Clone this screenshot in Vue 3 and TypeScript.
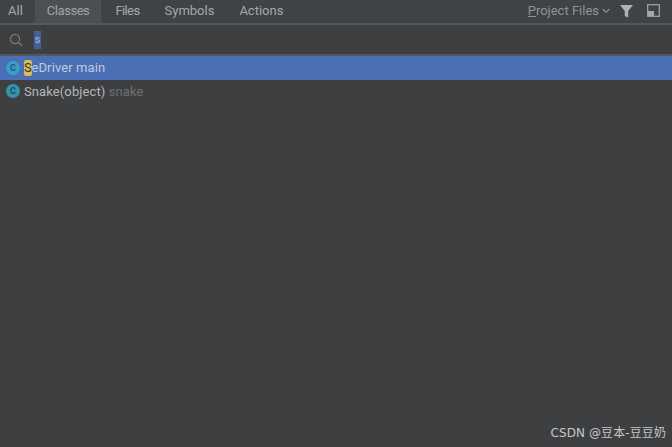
<script setup lang="ts">
const tabs = ['All', 'Classes', 'Files', 'Symbols', 'Actions']
</script>

<template>
  <div class="page">
    <header class="tabs">
      <div v-for="t in tabs" :key="t" class="tab" :class="['tab-' + t.toLowerCase(), { active: t === 'Classes' }]">{{ t }}</div>
      <div class="tools">
        <span class="scope"><u>P</u>roject Files</span>
        <svg class="chev" width="8" height="6" viewBox="0 0 8 6"><path d="M0.7 1l3.3 3.3L7.3 1" fill="none" stroke="#8b8f92" stroke-width="1.2"/></svg>
        <svg class="funnel" width="13" height="14" viewBox="0 0 13 14"><path d="M0 1h13L8.2 7v6.5L4.8 12V7z" fill="#b0b3b5"/></svg>
        <svg class="pin" width="13" height="13" viewBox="0 0 13 13"><rect x="0.7" y="0.7" width="11.6" height="11.6" fill="none" stroke="#a4a7a9" stroke-width="1.2"/><rect x="1" y="7" width="6" height="5" fill="#a4a7a9"/></svg>
      </div>
    </header>
    <div class="search">
      <svg width="14" height="14" viewBox="0 0 14 14"><circle cx="6" cy="6" r="4.6" fill="none" stroke="#777a7c" stroke-width="1.2"/><path d="M9.5 9.5l3.5 3.5" stroke="#777a7c" stroke-width="1.3"/></svg>
      <span class="query">s</span>
    </div>
    <div class="row selected">
      <span class="icon">C</span>
      <span class="name"><span class="hit">S</span>eDriver main</span>
    </div>
    <div class="row">
      <span class="icon">C</span>
      <span class="name">Snake(object) <span class="dim">snake</span></span>
    </div>
    <div class="mark">CSDN @豆本-豆豆奶</div>
  </div>
</template>

<style>
html, body { margin: 0; background: #3e3f41; }
</style>

<style scoped>
.page {
  position: relative;
  width: 672px;
  height: 447px;
  overflow: hidden;
  background: #3e3f41;
  color: #b4b7b9;
  font-family: "Roboto", "Noto Sans", sans-serif;
  font-size: 13px;
}
.tabs {
  display: flex;
  height: 23px;
  border-bottom: 2px solid #55585a;
  background: #404345;
}
.tab {
  padding: 0 12.5px;
  line-height: 21px;
  color: #a5a8aa;
}
.tab-all { padding: 0 12px 0 8px; }
.tab.active {
  background: #4b5053;
  padding: 0 12px;
  margin-right: 1.5px;
  color: #a0a4a6;
}
.tab-classes { letter-spacing: -0.45px; }
.tab-files { letter-spacing: -0.6px; }
.tools {
  margin-left: auto;
  display: flex;
  align-items: center;
  height: 21px;
  padding-right: 12px;
}
.scope { color: #8f9395; }
.chev { margin-left: 3px; }
.funnel { margin-left: 10px; }
.pin { margin-left: 14px; }
.search {
  display: flex;
  align-items: center;
  height: 29px;
  padding-left: 9px;
  border-bottom: 2px solid #55585a;
  background: #3e3f40;
}
.query {
  margin-left: 11px;
  width: 7px;
  height: 18px;
  background: #41639b;
  color: #a9b7ca;
  text-align: center;
  font-size: 11px;
  line-height: 18px;
}
.row {
  display: flex;
  align-items: center;
  height: 23.5px;
  padding-left: 6px;
}
.selected { background: #4a6fb5; color: #c3cbd8; }
.icon {
  width: 14px;
  height: 14px;
  border-radius: 50%;
  background: #3791ac;
  color: #1e4d5f;
  font-size: 9px;
  font-weight: 700;
  line-height: 14px;
  text-align: center;
}
.selected .icon { background: #3a9cc8; color: #24557a; }
.name { margin-left: 4px; white-space: pre; letter-spacing: 0.1px; }
.hit {
  display: inline-block;
  width: 7.5px;
  text-align: center;
  line-height: 16px;
  background: #d7bb60;
  color: #33332c;
  border-radius: 2px;
}
.dim { color: #6c6f71; }
.mark {
  position: absolute;
  right: 6px;
  bottom: 7px;
  color: #c4c6c7;
  font-family: "DejaVu Sans", "Noto Sans CJK SC", sans-serif;
  font-size: 12px;
  letter-spacing: 0.1px;
}
</style>
